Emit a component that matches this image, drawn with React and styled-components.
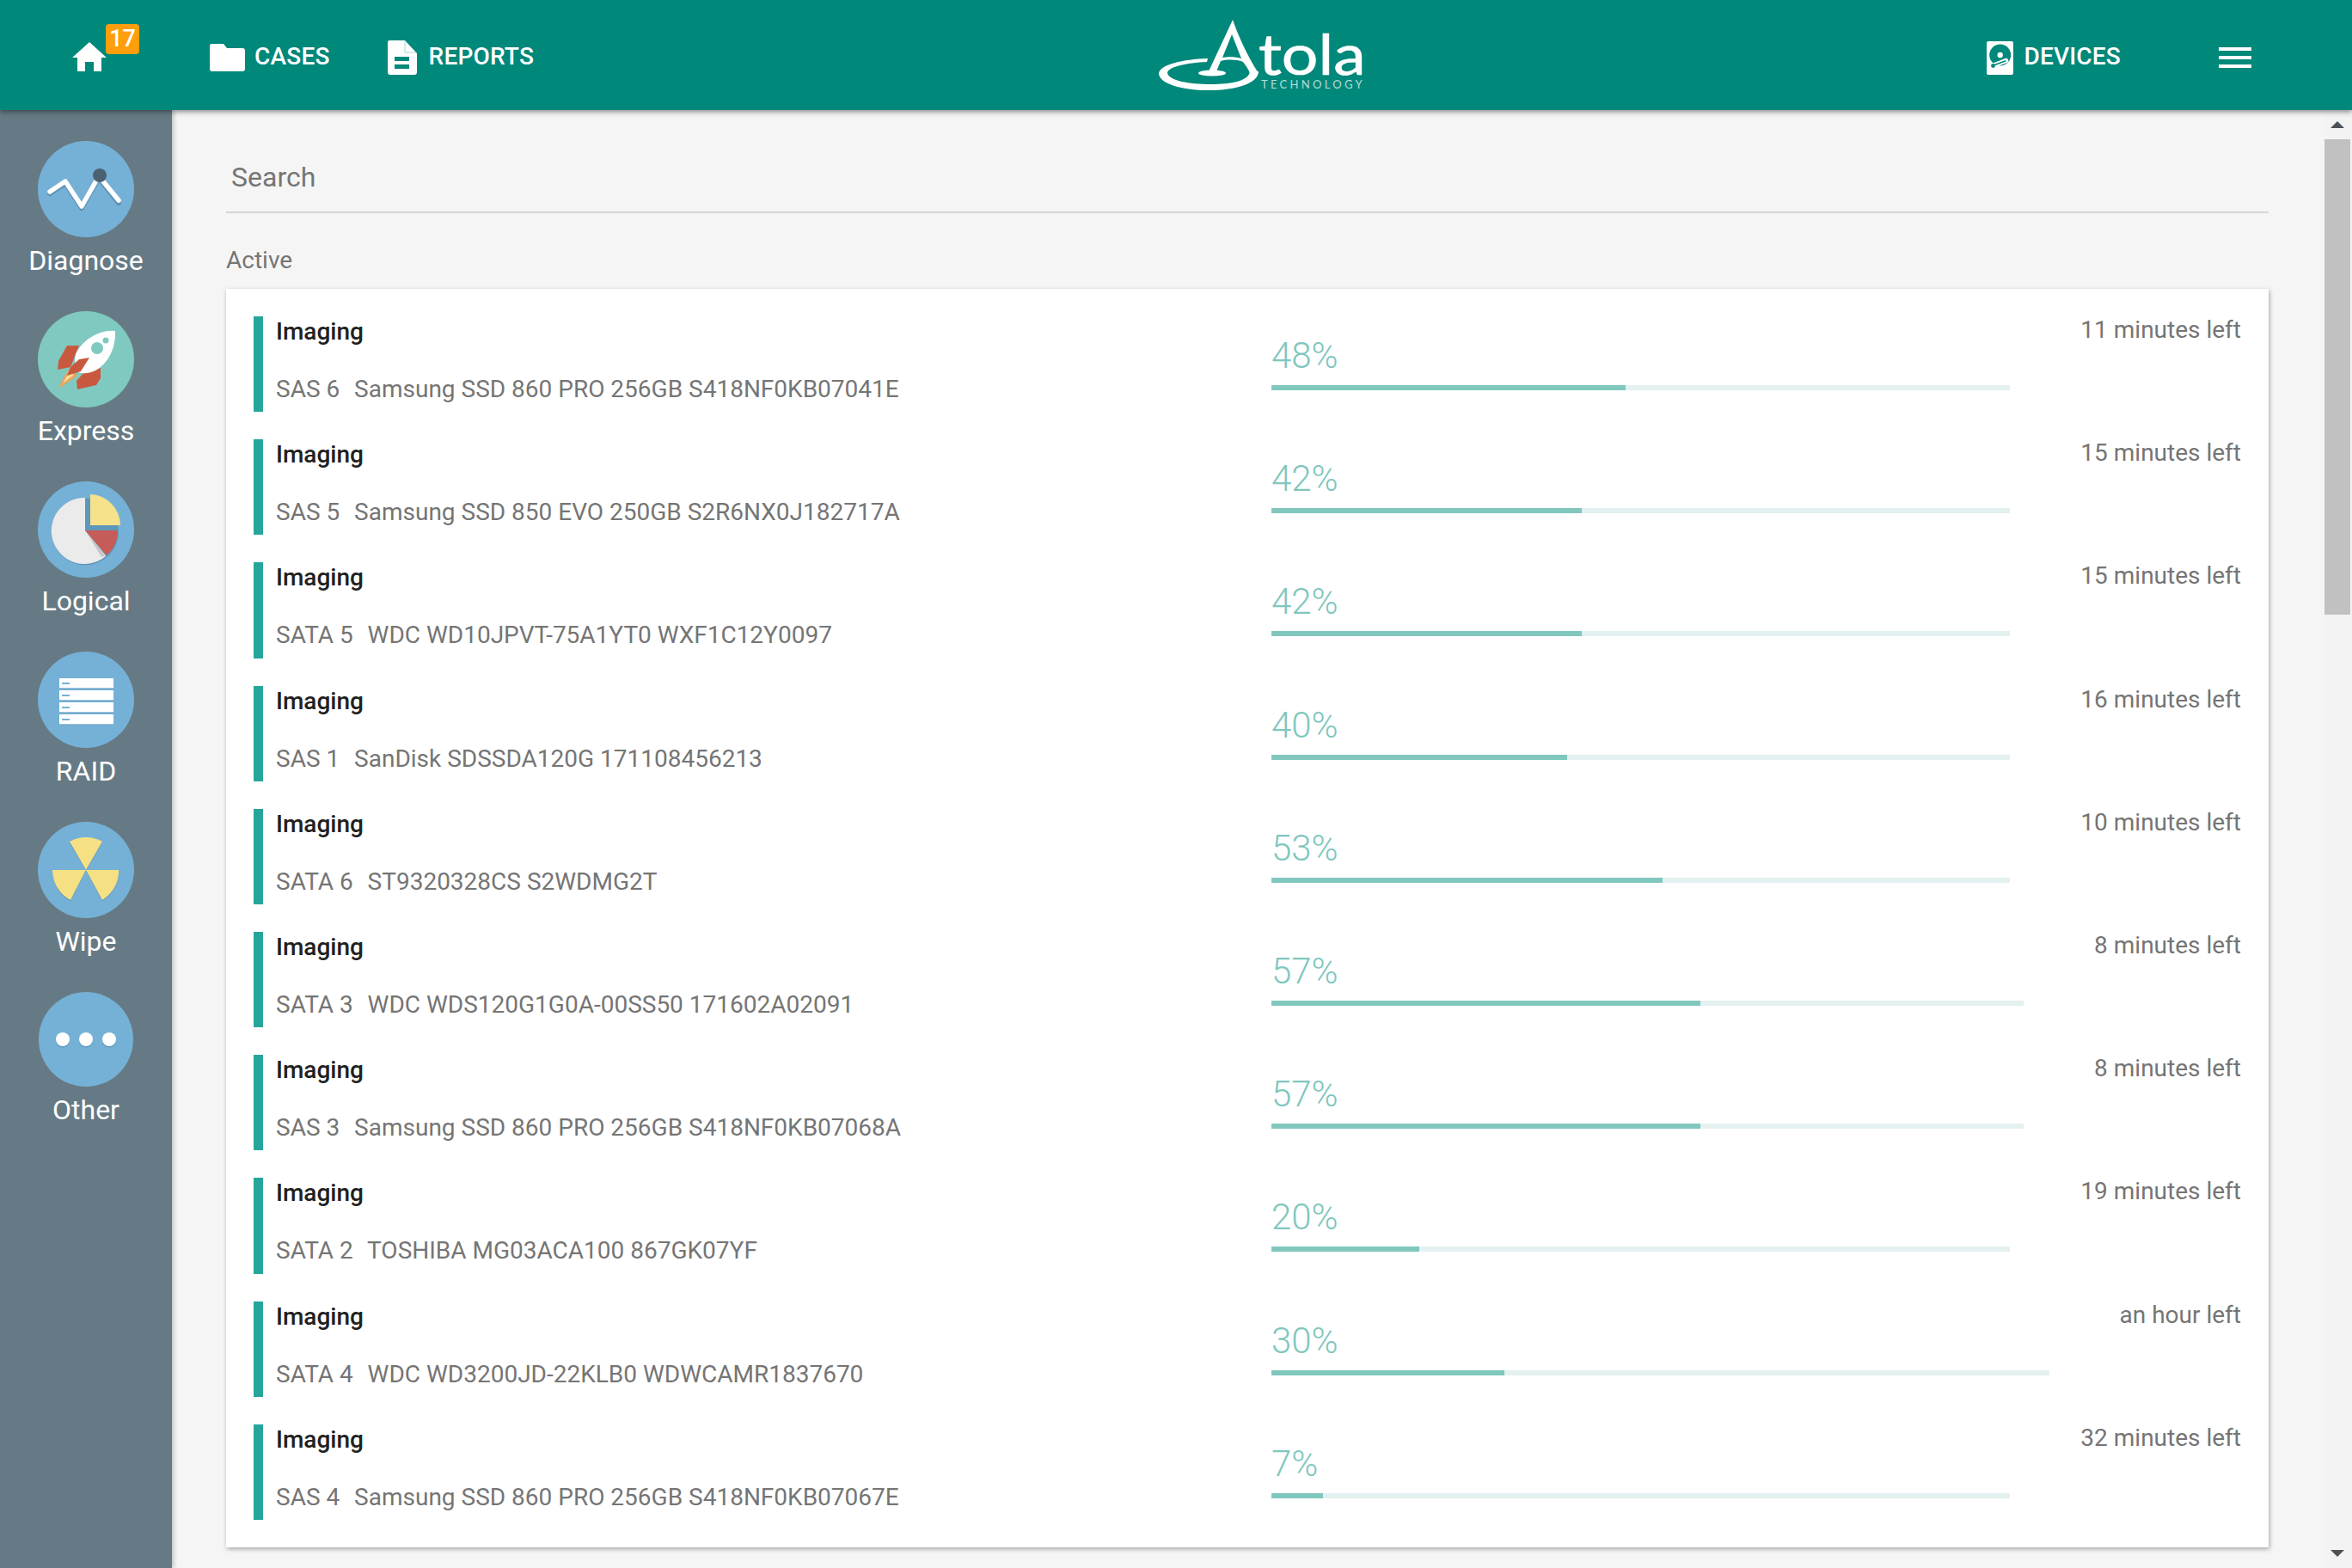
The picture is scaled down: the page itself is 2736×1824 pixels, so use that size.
import React from "react";
import styled, { createGlobalStyle } from "styled-components";

const Global = createGlobalStyle`
  html, body { margin: 0; padding: 0; background: #f5f5f5; }
  body { font-family: Roboto, "Liberation Sans", sans-serif; overflow: hidden; }
  * { box-sizing: border-box; }
`;

const Page = styled.div`
  width: 2736px;
  height: 1824px;
  display: flex;
  flex-direction: column;
  overflow: hidden;
`;

const Header = styled.header`
  position: relative;
  z-index: 3;
  flex: 0 0 128px;
  display: flex;
  align-items: center;
  background: #00887a;
  color: #fff;
  box-shadow: 0 2px 6px rgba(0, 0, 0, 0.45);
`;

const LeftNav = styled.nav`
  flex: 0 0 1348px;
  display: flex;
  align-items: center;
  padding-left: 84px;
`;

const RightNav = styled.nav`
  flex: 1;
  display: flex;
  align-items: center;
  justify-content: flex-end;
  padding-right: 117px;
`;

const HomeLink = styled.a`
  position: relative;
  display: block;
  width: 78px;
  height: 34px;
  margin-top: 4px;
  margin-right: 82px;
  & > svg { display: block; }
`;

const Badge = styled.span`
  position: absolute;
  left: 39px;
  top: -21px;
  width: 39px;
  height: 35px;
  border-radius: 4px;
  background: #ff9e0c;
  color: #fff;
  font-size: 27px;
  font-weight: 500;
  line-height: 35px;
  text-align: center;
`;

const NavItem = styled.a`
  display: flex;
  align-items: center;
  gap: ${(p) => p.$gap}px;
  margin-right: ${(p) => p.$after}px;
  font-size: 28px;
  font-weight: 500;
  letter-spacing: 0.2px;
  color: #fff;
  line-height: 40px;
  & > svg { display: block; margin-top: 6px; }
`;

const NavText = styled.span`
  margin-top: 3px;
`;

const Burger = styled.button`
  display: flex;
  flex-direction: column;
  gap: 6px;
  width: 38px;
  margin-top: 6px;
  padding: 0;
  border: 0;
  background: none;
  & > i { display: block; height: 4px; background: #fff; }
`;

const LogoBox = styled.div`
  flex: 0 0 auto;
  display: flex;
  height: 84px;
  margin-top: 2px;
`;

const LogoMark = styled.svg`
  flex: 0 0 116px;
  display: block;
  width: 116px;
  height: 84px;
`;

const LogoText = styled.div`
  display: flex;
  flex-direction: column;
  padding-top: 13px;
  color: #fff;
  font-family: Lato, "Open Sans", sans-serif;
`;

const LogoWord = styled.span`
  display: block;
  height: 52px;
  font-size: 66px;
  line-height: 52px;
  -webkit-text-stroke: 0.7px #fff;
  transform: scaleX(1.14);
  transform-origin: left center;
`;

const LogoTag = styled.span`
  display: block;
  margin: 3px 0 0 3px;
  font-size: 13px;
  line-height: 14px;
  letter-spacing: 3.3px;
  color: #b6dcd7;
`;

const Body = styled.div`
  flex: 1;
  display: flex;
  min-height: 0;
`;

const Sidebar = styled.aside`
  position: relative;
  z-index: 2;
  flex: 0 0 200px;
  display: flex;
  flex-direction: column;
  align-items: center;
  gap: 32px;
  padding-top: 36px;
  background: #667a85;
  box-shadow: 2px 0 5px rgba(0, 0, 0, 0.22);
`;

const SideItem = styled.a`
  display: flex;
  flex-direction: column;
  align-items: center;
  width: 100%;
  & > svg { display: block; }
`;

const SideLabel = styled.span`
  font-size: 32px;
  line-height: 54px;
  color: #fff;
`;

const Main = styled.main`
  flex: 1;
  min-width: 0;
  padding: 40px 65px 0 63px;
  background: #f5f5f5;
`;

const SearchField = styled.div`
  height: 80px;
  padding: 18px 0 0 6px;
  border-bottom: 2px solid #d6d6d6;
  font-size: 32px;
  line-height: 40px;
  color: #757575;
`;

const SectionLabel = styled.div`
  margin-top: 40px;
  height: 48px;
  font-size: 28px;
  line-height: 30px;
  color: #757575;
`;

const Card = styled.section`
  display: flex;
  flex-direction: column;
  gap: 32px;
  padding: 32px;
  background: #fff;
  box-shadow: 1px 2px 5px rgba(0, 0, 0, 0.32);
`;

const Row = styled.article`
  display: flex;
  height: 111.2px;
`;

const Info = styled.div`
  flex: 0 0 1184px;
  padding-left: 15px;
  border-left: 11px solid #26a69a;
`;

const Title = styled.div`
  font-size: 28px;
  font-weight: 500;
  line-height: 36px;
  color: #212121;
`;

const Sub = styled.div`
  margin-top: 31px;
  font-size: 28px;
  line-height: 36px;
  color: #757575;
  white-space: pre;
`;

const Port = styled.span`
  margin-right: 3px;
`;

const Progress = styled.div`
  flex: 1;
  margin-right: 82px;
  padding-top: 22px;
`;

const Percent = styled.div`
  font-size: 42px;
  font-weight: 300;
  line-height: 48px;
  color: #80c7be;
`;

const Track = styled.div`
  height: 6px;
  margin-top: 10px;
  background: #e3f1f0;
`;

const Fill = styled.div`
  height: 100%;
  background: #80c7be;
`;

const TimeLeft = styled.div`
  font-size: 28px;
  line-height: 32px;
  color: #757575;
  white-space: nowrap;
`;

const Scrollbar = styled.div`
  flex: 0 0 32px;
  display: flex;
  flex-direction: column;
  padding-right: 2px;
  background: #f3f3f3;
`;

const Arrow = styled.div`
  flex: 0 0 34px;
  display: flex;
  align-items: center;
  justify-content: center;
  &::before {
    content: "";
    width: 0;
    height: 0;
    border-left: 8px solid transparent;
    border-right: 8px solid transparent;
    border-${(p) => (p.$down ? "top" : "bottom")}: 8px solid #4c5258;
  }
`;

const Thumb = styled.div`
  flex: 0 0 553px;
  background: #c1c1c1;
`;

const ScrollRest = styled.div`
  flex: 1;
`;

const rows = [
  ["SAS 6", "Samsung SSD 860 PRO 256GB S418NF0KB07041E", 48, "11 minutes left"],
  ["SAS 5", "Samsung SSD 850 EVO 250GB S2R6NX0J182717A", 42, "15 minutes left"],
  ["SATA 5", "WDC WD10JPVT-75A1YT0 WXF1C12Y0097", 42, "15 minutes left"],
  ["SAS 1", "SanDisk SDSSDA120G 171108456213", 40, "16 minutes left"],
  ["SATA 6", "ST9320328CS S2WDMG2T", 53, "10 minutes left"],
  ["SATA 3", "WDC WDS120G1G0A-00SS50 171602A02091", 57, "8 minutes left"],
  ["SAS 3", "Samsung SSD 860 PRO 256GB S418NF0KB07068A", 57, "8 minutes left"],
  ["SATA 2", "TOSHIBA MG03ACA100 867GK07YF", 20, "19 minutes left"],
  ["SATA 4", "WDC WD3200JD-22KLB0 WDWCAMR1837670", 30, "an hour left"],
  ["SAS 4", "Samsung SSD 860 PRO 256GB S418NF0KB07067E", 7, "32 minutes left"],
];

const BLUE = "#75b1d6";

const Round = ({ size = 112, fill = BLUE, children }) => (
  <svg width={size} height={size} viewBox={`0 0 ${size} ${size}`}>
    <circle cx={size / 2} cy={size / 2} r={size / 2} fill={fill} />
    {children}
  </svg>
);

const DiagnoseIcon = () => (
  <Round>
    <polyline points="14,60 32,48 51,77 71,42 94,71" fill="none" stroke="#5d93b5" strokeWidth="5.5" strokeLinecap="round" strokeLinejoin="round" transform="translate(0,1.5)" />
    <polyline points="14,59 32,47 51,76 71,41 94,69" fill="none" stroke="#fff" strokeWidth="5.5" strokeLinecap="round" strokeLinejoin="round" />
    <circle cx="72" cy="40" r="8" fill="#4b6172" />
  </Round>
);

const ExpressIcon = () => (
  <Round fill="#7fc9c0">
    <path d="M34 40 L48 40 L38 65 L23 68 L24 58 Z" fill="#c8593f" />
    <path d="M73 66 L73 78 L68 86 L46 91 L45 81 L54 71 Z" fill="#c8593f" />
    <path d="M38 66 L46 75 L24 90 L31 75 Z" fill="#eaa35c" />
    <path d="M37 70 L42 74 L29 84 Z" fill="#f7dd9a" />
    <path d="M90 23 C72 21 52 33 44 50 C42 58 44 66 47 71 C55 74 66 71 73 65 C84 56 91 40 90 23 Z" fill="#fff" />
    <path d="M60 54 L50 70 L34 75 L38 65 L48 56 Z" fill="#c8593f" />
    <circle cx="69" cy="43" r="7" fill="#7fc9c0" />
    <circle cx="79" cy="34" r="3.5" fill="#7fc9c0" />
  </Round>
);

const LogicalIcon = () => (
  <Round>
    <circle cx="55" cy="58.5" r="39" fill="#5f97ba" />
    <path d="M55 57 L55 19 A38.5 38.5 0 1 0 79 87 Z" fill="#ebebeb" />
    <path d="M55 57 L79 86 L74 88 Z" fill="#c8c8c8" />
    <path d="M55 57 L93 57 A38 38 0 0 1 80 86 Z" fill="#c65c58" />
    <path d="M61 51 L61 15 A36 36 0 0 1 96 51 Z" fill="#f5e28a" />
  </Round>
);

const RaidIcon = () => (
  <Round>
    {[31, 45, 59, 73].map((y) => (
      <g key={y}>
        <rect x="25" y={y + 0.8} width="63" height="11.4" fill="#5f97ba" />
        <rect x="25" y={y} width="63" height="11.4" fill="#fff" />
        <rect x="28" y={y + 5} width="9" height="2" fill="#75b1d6" />
      </g>
    ))}
  </Round>
);

const Blades = ({ fill, dy = 0 }) => (
  <g fill={fill} transform={`translate(0,${dy})`}>
    <path d="M56 56 L37 23 A38 38 0 0 1 75 23 Z" />
    <path d="M56 56 L17 56 A39 39 0 0 0 38 91 Z" />
    <path d="M56 56 L94 56 A39 39 0 0 1 75 91 Z" />
  </g>
);

const WipeIcon = () => (
  <Round>
    <Blades fill="#5f97ba" dy={1.2} />
    <Blades fill="#f5e083" />
  </Round>
);

const OtherIcon = () => (
  <Round size={110}>
    {[28, 55, 82].map((x) => (
      <g key={x}>
        <circle cx={x} cy="56.5" r="8" fill="#5f97ba" />
        <circle cx={x} cy="55" r="8" fill="#fff" />
      </g>
    ))}
  </Round>
);

const tools = [
  ["Diagnose", DiagnoseIcon],
  ["Express", ExpressIcon],
  ["Logical", LogicalIcon],
  ["RAID", RaidIcon],
  ["Wipe", WipeIcon],
  ["Other", OtherIcon],
];

const HomeIcon = () => (
  <svg width="40" height="34" viewBox="0 0 40 34">
    <path d="M20 0 L40 18 L34 18 L34 34 L25 34 L25 23 L15 23 L15 34 L6 34 L6 18 L0 18 Z" fill="#fff" />
  </svg>
);

const FolderIcon = () => (
  <svg width="41" height="32" viewBox="0 0 41 32">
    <path d="M2 0 H16 L20 5 H38 C40 5 41 6 41 8 V29 C41 31 40 32 38 32 H3 C1 32 0 31 0 29 V2 C0 1 1 0 2 0 Z" fill="#fff" />
  </svg>
);

const FileIcon = () => (
  <svg width="34" height="40" viewBox="0 0 34 40">
    <path fillRule="evenodd" d="M2 0 H20 L34 15 V37 C34 39 33 40 31 40 H3 C1 40 0 39 0 37 V2 C0 1 1 0 2 0 Z M8 19 V24 H25 V19 Z M8 28 V33 H25 V28 Z" fill="#fff" />
    <path d="M20 1 V14 H33" fill="none" stroke="#00887a" strokeWidth="1" opacity="0.35" />
  </svg>
);

const DriveIcon = () => (
  <svg width="31" height="39" viewBox="0 0 31 39">
    <rect width="31" height="39" rx="2" fill="#fff" />
    <circle cx="15.7" cy="16" r="12.5" fill="#00887a" />
    <circle cx="15.7" cy="16" r="3.2" fill="#fff" />
    <path d="M7 28.5 L22.5 22.5" stroke="#fff" strokeWidth="5.5" strokeLinecap="round" />
    <path d="M8 28 L21.5 23" stroke="#00887a" strokeWidth="1.8" strokeLinecap="round" />
    <circle cx="7.5" cy="28.5" r="2.4" fill="#00887a" />
  </svg>
);

const Logo = () => (
  <LogoBox>
    <LogoMark viewBox="0 0 116 84">
      <path d="M0 62 C2 52 28 46 57 45 L56 49 C32 50 10 55 10 62 C12 71 35 75 60 75 C85 75 105 71 106 60 L116 60 C116 74 90 82 58 82 C25 82 0 74 0 62 Z" fill="#fff" />
      <path fillRule="evenodd" d="M86 0 C92 18 104 44 116 62 L106 62 C103 55 100 52 98 49 C90 46 80 46 72 48 L67 60 L58 60 Z M85 17 L74 44 C80 43 90 43 96 45 Z" fill="#fff" />
      <ellipse cx="62" cy="62" rx="16" ry="3.6" fill="#fff" />
    </LogoMark>
    <LogoText>
      <LogoWord>tola</LogoWord>
      <LogoTag>TECHNOLOGY</LogoTag>
    </LogoText>
  </LogoBox>
);

export default function App() {
  return (
    <Page>
      <Global />
      <Header>
        <LeftNav>
          <HomeLink>
            <HomeIcon />
            <Badge>17</Badge>
          </HomeLink>
          <NavItem $gap={11} $after={67}>
            <FolderIcon />
            <NavText>CASES</NavText>
          </NavItem>
          <NavItem $gap={14} $after={0}>
            <FileIcon />
            <NavText>REPORTS</NavText>
          </NavItem>
        </LeftNav>
        <Logo />
        <RightNav>
          <NavItem $gap={12} $after={114}>
            <DriveIcon />
            <NavText>DEVICES</NavText>
          </NavItem>
          <Burger aria-label="Menu">
            <i />
            <i />
            <i />
          </Burger>
        </RightNav>
      </Header>
      <Body>
        <Sidebar>
          {tools.map(([label, Icon]) => (
            <SideItem key={label}>
              <Icon />
              <SideLabel>{label}</SideLabel>
            </SideItem>
          ))}
        </Sidebar>
        <Main>
          <SearchField>Search</SearchField>
          <SectionLabel>Active</SectionLabel>
          <Card>
            {rows.map(([port, device, pct, left]) => (
              <Row key={port}>
                <Info>
                  <Title>Imaging</Title>
                  <Sub>
                    <Port>{port}</Port>
                    {"  "}
                    {device}
                  </Sub>
                </Info>
                <Progress>
                  <Percent>{pct}%</Percent>
                  <Track>
                    <Fill style={{ width: `${pct}%` }} />
                  </Track>
                </Progress>
                <TimeLeft>{left}</TimeLeft>
              </Row>
            ))}
          </Card>
        </Main>
        <Scrollbar>
          <Arrow />
          <Thumb />
          <ScrollRest />
          <Arrow $down />
        </Scrollbar>
      </Body>
    </Page>
  );
}
